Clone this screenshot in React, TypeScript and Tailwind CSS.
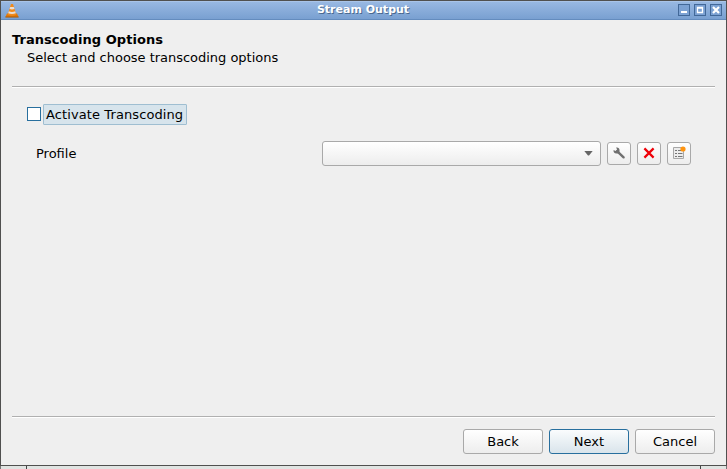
import React from "react";

function Cone() {
  return (
    <svg className="ml-[4px] h-[15px] w-[14px]" viewBox="0 0 14 16" preserveAspectRatio="none">
      <path d="M2 11.2 L12 11.2 L13.6 15 L0.4 15 Z" fill="#e07808" />
      <path d="M6 1 H8 L11.4 12.6 Q7 14.4 2.6 12.6 Z" fill="#f08a1c" />
      <path d="M5.2 4.2 H8.8 L9.5 6.3 Q7 7.3 4.5 6.3 Z" fill="#e9dfd6" />
      <path d="M3.8 8.9 Q7 10.2 10.2 8.9 L10.8 11 Q7 12.4 3.2 11 Z" fill="#e9dfd6" />
      <path d="M0.4 15 H13.6" stroke="#a85808" strokeWidth="1" />
    </svg>
  );
}

function WindowButton({ children }: { children: React.ReactNode }) {
  return (
    <div className="h-[12px] w-[12px] border border-[#426898] bg-[#7ba1d3]">
      <svg className="block h-[10px] w-[10px]" viewBox="0 0 10 10">
        {children}
      </svg>
    </div>
  );
}

function ToolButton({ children }: { children: React.ReactNode }) {
  return (
    <button className="flex h-[23px] w-6 items-start justify-center rounded-[3px] border border-[#a9a9a9] bg-linear-to-b from-white to-[#ededed] pt-[2px]">
      <svg className="h-4 w-4 shrink-0" viewBox="0 0 16 16">
        {children}
      </svg>
    </button>
  );
}

function DialogButton({ label, primary = false }: { label: string; primary?: boolean }) {
  return (
    <button
      className={
        primary
          ? "h-[25px] w-20 rounded-[3px] border border-[#286f9e] bg-linear-to-b from-[#fafcfd] to-[#d9e4eb] leading-[23px]"
          : "h-[25px] w-20 rounded-[3px] border border-[#a9a9a9] bg-linear-to-b from-white to-[#ededed] leading-[23px]"
      }
    >
      {label}
    </button>
  );
}

function Separator() {
  return <div className="mx-[11px] h-[2px] border-t border-b border-t-[#b0b0b0] border-b-white" />;
}

export default function App() {
  return (
    <div className="h-[469px] w-[727px] overflow-hidden bg-[#efefef] font-['DejaVu_Sans',sans-serif] text-[13px] text-black">
      <div className="flex h-[466px] flex-col border border-[#50504f]">
        <header className="flex h-[19px] shrink-0 items-start border-t border-b border-t-[#a9c4e8] border-b-[#648cbe] bg-linear-to-b from-[#98b8e2] to-[#79a0d1] pt-px">
          <Cone />
          <div className="flex-1 pr-[4px] pl-[33px] text-center text-[11px] leading-[13px] font-bold text-white [text-shadow:1px_1px_0_#49698f]">
            Stream Output
          </div>
          <div className="flex gap-1 pt-px pr-[4px]">
            <WindowButton>
              <path d="M2 7H8" stroke="#fff" strokeWidth="2" />
            </WindowButton>
            <WindowButton>
              <path d="M2.5 2.5H7.5V7.5H2.5Z M2 3H8" fill="none" stroke="#fff" strokeWidth="1.3" />
            </WindowButton>
            <WindowButton>
              <path d="M2 2L8 8M8 2L2 8" stroke="#fff" strokeWidth="2.2" />
            </WindowButton>
          </div>
        </header>
        <div className="h-[66px] shrink-0 pt-[12px] pl-[11px]">
          <h1 className="leading-[16px] font-bold tracking-[0.05px]">Transcoding Options</h1>
          <p className="mt-[2px] pl-[15px] leading-[16px] tracking-[-0.02px]">Select and choose transcoding options</p>
        </div>
        <Separator />
        <main className="min-h-0 flex-1 pt-4">
          <label className="flex items-start gap-[2px] pl-[26px]">
            <span className="mt-[3px] h-[14px] w-[14px] border border-[#286f9e] bg-white" />
            <span className="h-[21px] w-[144px] rounded-[1px] border border-[#9fbed1] bg-[#d7e4ec] pl-[2px] leading-[20px] tracking-[0.1px] whitespace-nowrap">
              Activate Transcoding
            </span>
          </label>
          <div className="mt-4 flex items-center pl-[35px]">
            <span className="w-[286px] leading-[16px]">Profile</span>
            <div className="flex h-[25px] w-[279px] items-center justify-end rounded-[3px] border border-[#a9a9a9] bg-linear-to-b from-white to-[#ededed] pr-[7px]">
              <svg className="h-[5px] w-[9px]" viewBox="0 0 9 5">
                <path d="M0.3 0H8.7L5 4.5H4Z" fill="#666" />
              </svg>
            </div>
            <div className="ml-[6px] flex gap-[6px]">
              <ToolButton>
                <path d="M6.3 6.3L12.6 12.3" stroke="#707070" strokeWidth="2.4" strokeLinecap="round" />
                <path d="M5.1 2.6A3 3 0 1 1 2.6 5.1L4.5 6.1L6.1 4.5Z" fill="#707070" />
              </ToolButton>
              <ToolButton>
                <path d="M3.4 3.4L12.6 12.6M12.6 3.4L3.4 12.6" stroke="#ee0008" strokeWidth="2.2" />
              </ToolButton>
              <ToolButton>
                <path d="M2.5 2.5H12.5V13.5H2.5Z" fill="#ececec" stroke="#a8a8a8" />
                <path d="M4 5.5H6M4 8.5H6M4 11.5H6M7 5.5H11.5M7 8.5H11.5M7 11.5H11.5" stroke="#777" />
                <circle cx="12" cy="4" r="2.6" fill="#ff940f" />
              </ToolButton>
            </div>
          </div>
        </main>
        <Separator />
        <footer className="flex h-[47px] shrink-0 justify-end gap-[6px] pt-[11px] pr-[11px]">
          <DialogButton label="Back" />
          <DialogButton label="Next" primary />
          <DialogButton label="Cancel" />
        </footer>
      </div>
      <div className="flex h-[3px] justify-between border-x border-[#777] bg-[#e0e4e2] pr-[25px] pl-[25px]">
        <span className="h-[3px] w-px bg-[#444]" />
        <span className="h-[3px] w-px bg-[#444]" />
      </div>
    </div>
  );
}
